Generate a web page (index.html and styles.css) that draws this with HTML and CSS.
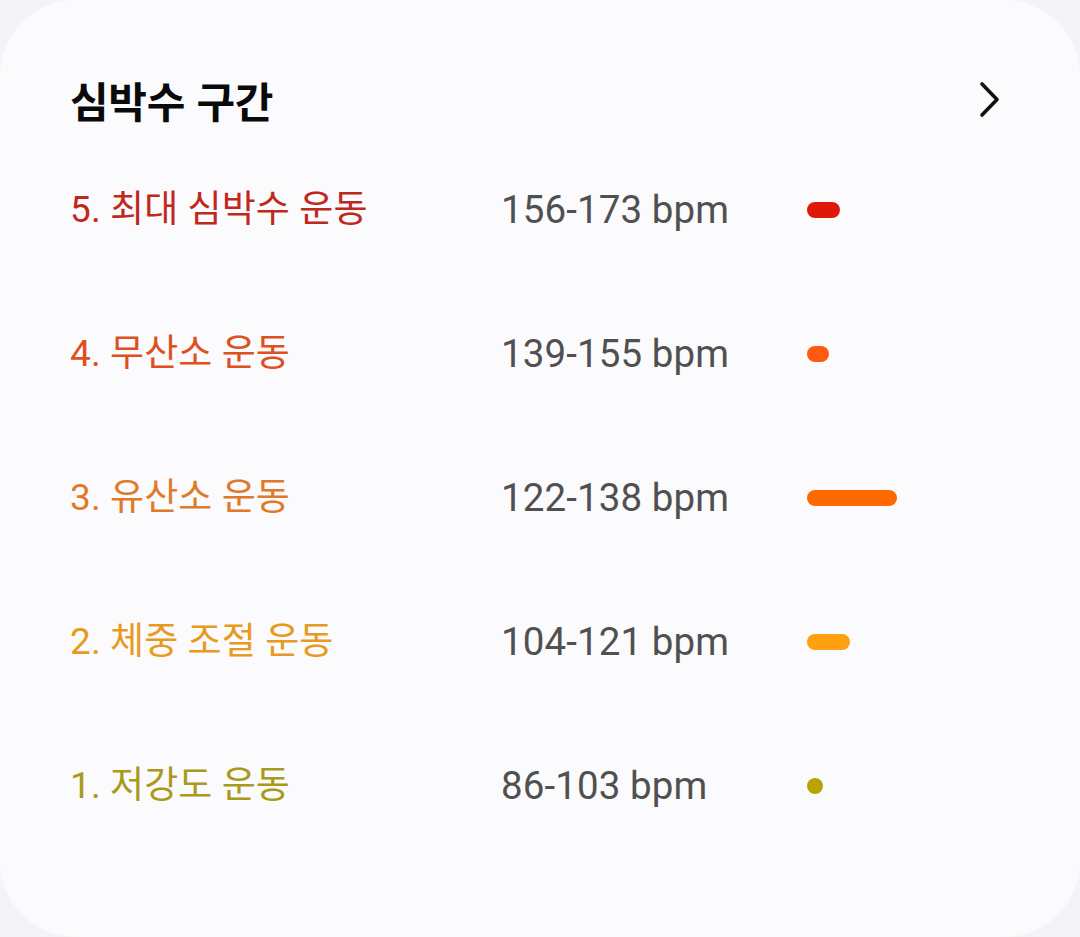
FILE: index.html
```html
<!DOCTYPE html>
<html lang="ko">
<head>
<meta charset="utf-8">
<link rel="stylesheet" href="styles.css">
</head>
<body>
<div class="card">
  <div class="header">
    <h1 class="title">심박수 구간</h1>
    <svg class="chevron" width="24" height="40" viewBox="0 0 24 40">
      <polyline points="4,4 19,19.5 4,35" fill="none" stroke="#111" stroke-width="3.6" stroke-linecap="round" stroke-linejoin="round"/>
    </svg>
  </div>
  <div class="zones">
    <div class="zone z5">
      <span class="label">5. 최대 심박수 운동</span>
      <span class="range">156-173 bpm</span>
      <span class="bar" style="width:33px"></span>
    </div>
    <div class="zone z4">
      <span class="label">4. 무산소 운동</span>
      <span class="range">139-155 bpm</span>
      <span class="bar" style="width:22px"></span>
    </div>
    <div class="zone z3">
      <span class="label">3. 유산소 운동</span>
      <span class="range">122-138 bpm</span>
      <span class="bar" style="width:90px"></span>
    </div>
    <div class="zone z2">
      <span class="label">2. 체중 조절 운동</span>
      <span class="range">104-121 bpm</span>
      <span class="bar" style="width:43px"></span>
    </div>
    <div class="zone z1">
      <span class="label">1. 저강도 운동</span>
      <span class="range">86-103 bpm</span>
      <span class="bar" style="width:16px"></span>
    </div>
  </div>
</div>
</body>
</html>
```
FILE: styles.css
```css
html, body {
  margin: 0;
  padding: 0;
  background: #f4f4f6;
}
body {
  font-family: "Roboto", "Noto Sans CJK KR", sans-serif;
}
.card {
  box-sizing: border-box;
  width: 1080px;
  height: 937px;
  background: #fbfbfd;
  border-radius: 76px;
  padding: 0 70px;
}
.header {
  display: flex;
  justify-content: space-between;
  align-items: flex-start;
  height: 138px;
  padding-top: 62px;
  box-sizing: border-box;
}
.title {
  margin: 0;
  font-family: "Noto Sans CJK KR", sans-serif;
  font-weight: 700;
  font-size: 42px;
  line-height: 76px;
  color: #0a0a0a;
  letter-spacing: -0.3px;
}
.chevron {
  margin-top: 18px;
  margin-right: 8px;
}
.zones {
  display: flex;
  flex-direction: column;
}
.zone {
  display: grid;
  grid-template-columns: 431px 306px 1fr;
  align-items: center;
  height: 144px;
}
.label {
  font-size: 37px;
  line-height: 48px;
  letter-spacing: 0.1px;
}
.range {
  font-size: 38.5px;
  line-height: 48px;
  color: #505050;
  letter-spacing: 0.1px;
}
.bar {
  display: block;
  height: 16px;
  border-radius: 8px;
}
.z5 .label { color: #c0281c; }
.z5 .bar { background: #dd1a08; }
.z4 .label { color: #dd5020; }
.z4 .bar { background: #ff5a14; }
.z3 .label { color: #e07a2a; }
.z3 .bar { background: #ff6a00; }
.z2 .label { color: #e89a20; }
.z2 .bar { background: #ffa010; }
.z1 .label { color: #a99a1a; }
.z1 .bar { background: #b8a400; }
```
